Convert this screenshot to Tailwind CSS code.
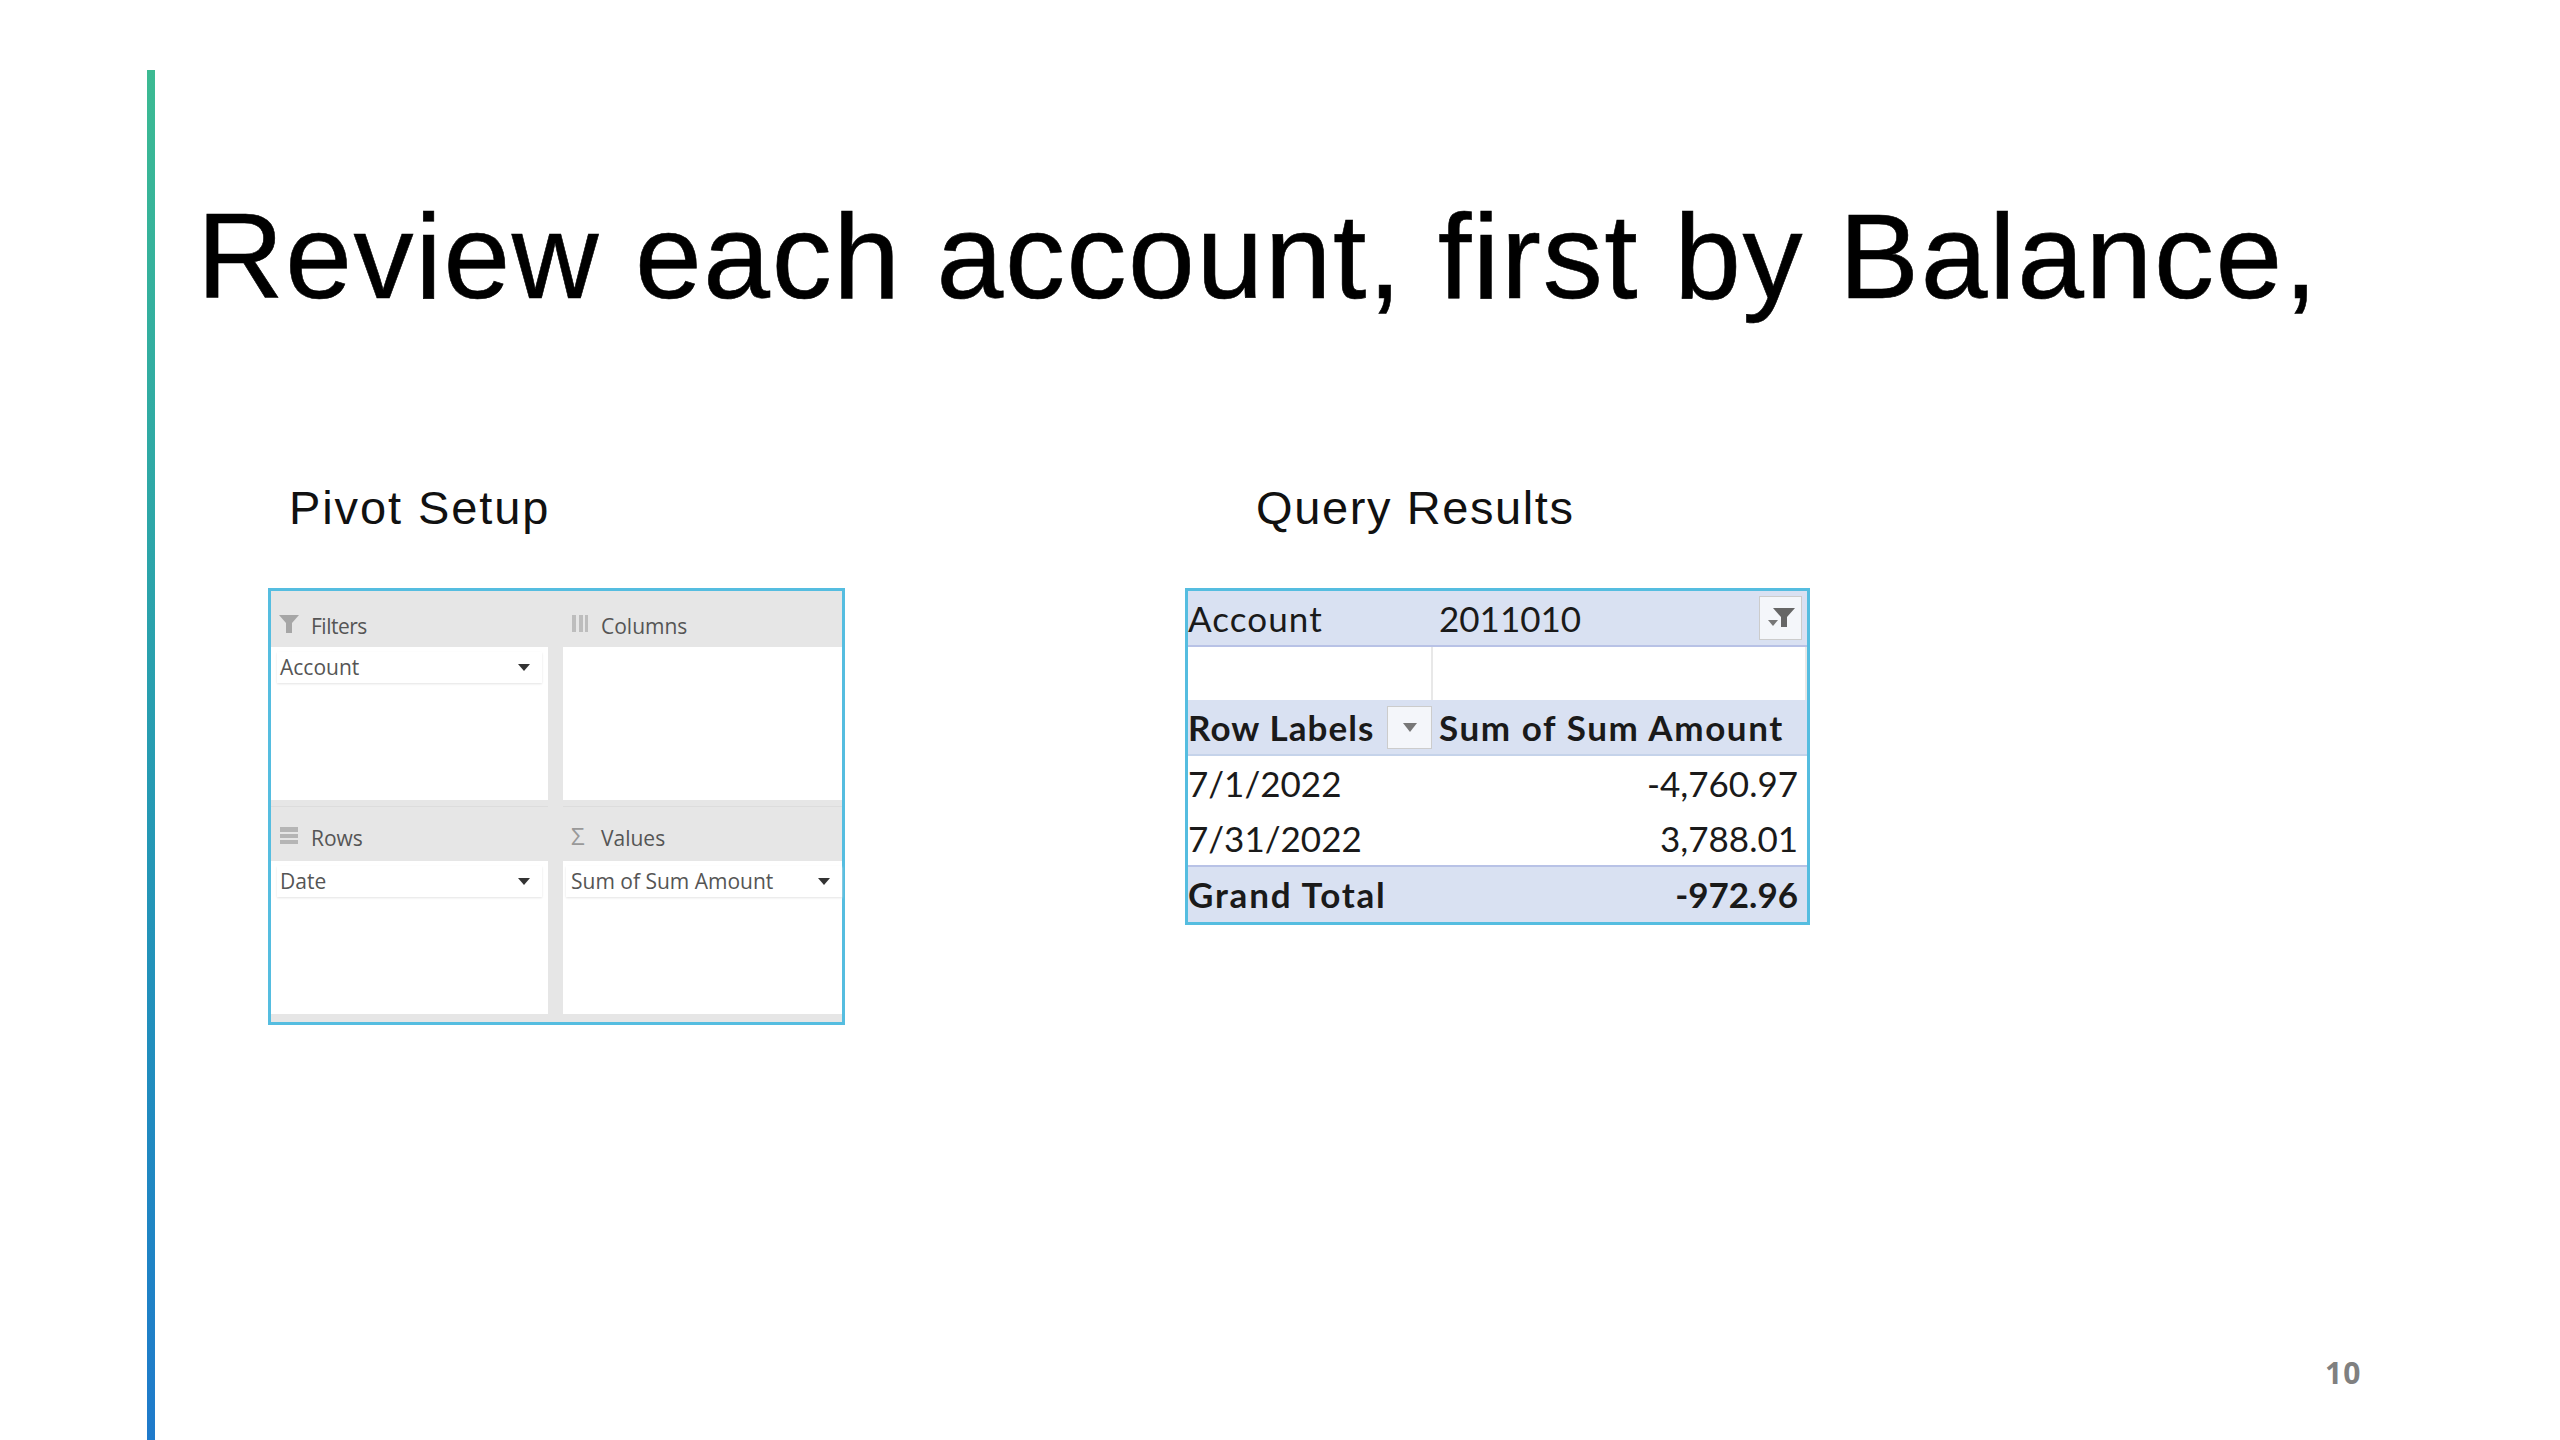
<!DOCTYPE html>
<html lang="en">
<head>
    <meta charset="UTF-8">
    <title>Review each account</title>
    <script src="https://cdn.jsdelivr.net/npm/@tailwindcss/browser@4"></script>
</head>
<body class="bg-white w-[2560px] h-[1440px] overflow-hidden font-['Liberation_Sans',sans-serif]">
    <div class="h-full pt-[70px] pl-[147px] flex">
        <!-- accent bar -->
        <div class="w-2 h-[1370px] bg-gradient-to-b from-[#3cba92] to-[#1f7acb]"></div>

        <div class="flex-1 flex flex-col">
            <h1 class="mt-[116px] ml-[42px] text-[120px] leading-[140px] tracking-[1.6px] text-black whitespace-nowrap [-webkit-text-stroke:0.6px_black]">Review each account, first by Balance,</h1>

            <div class="flex mt-[152px]">
                <!-- pivot setup -->
                <div class="w-[917px] ml-[113px]">
                    <div class="ml-[21px] h-[60px] text-[47px] leading-[60px] text-[#111] tracking-[1.9px]">Pivot Setup</div>
                    <div class="mt-[50px] w-[577px] h-[437px] border-[3px] border-[#55bde0] bg-[#e6e6e6] grid grid-cols-[277px_1fr] grid-rows-[215px_1fr] gap-x-[15px] font-['Open_Sans',sans-serif] text-[21px] text-[#555]">
                        <div class="flex flex-col">
                            <div class="h-[56px] pt-4 flex items-center pl-2 gap-[12px]">
                                <svg class="w-5 h-5 mt-[-6px]" viewBox="0 0 20 20"><path d="M0 1h20l-7 8v10h-6V9z" fill="#a6a6a6"/></svg>
                                <span class="tracking-[-0.5px]">Filters</span>
                            </div>
                            <div class="flex-1 mb-[6px] bg-white pt-[5px] px-[6px]">
                                <div class="h-[31px] flex items-center justify-between pl-[3px] pr-3 shadow-[0_1px_2px_#e4e4e4]">
                                    <span>Account</span>
                                    <span class="w-0 h-0 border-x-[6px] border-t-[7px] border-x-transparent border-t-[#333]"></span>
                                </div>
                            </div>
                        </div>
                        <div class="flex flex-col">
                            <div class="h-[56px] pt-4 flex items-center pl-2 gap-[10px]">
                                <svg class="w-5 h-5 mt-[-6px]" viewBox="0 0 20 20"><path d="M1 1h4v17H1zM8 1h4v17H8zM14 1h3v17h-3z" fill="#bdbdbd"/></svg>
                                <span>Columns</span>
                            </div>
                            <div class="flex-1 mb-[6px] bg-white"></div>
                        </div>
                        <div class="flex flex-col border-t border-[#dcdcdc]">
                            <div class="h-[54px] pt-[10px] flex items-center pl-2 gap-[12px]">
                                <svg class="w-5 h-5 mt-[-6px]" viewBox="0 0 20 20"><path d="M1 1h18v5H1zM1 8h18v4H1zM1 14h18v4H1z" fill="#b5b5b5"/></svg>
                                <span>Rows</span>
                            </div>
                            <div class="flex-1 mb-2 bg-white pt-[5px] px-[6px]">
                                <div class="h-[31px] flex items-center justify-between pl-[3px] pr-3 shadow-[0_1px_2px_#e4e4e4]">
                                    <span>Date</span>
                                    <span class="w-0 h-0 border-x-[6px] border-t-[7px] border-x-transparent border-t-[#333]"></span>
                                </div>
                            </div>
                        </div>
                        <div class="flex flex-col border-t border-[#dcdcdc]">
                            <div class="h-[54px] pt-[10px] flex items-center pl-2 gap-[10px]">
                                <span class="w-5 mt-[-6px] text-[24px] leading-5 text-[#999]">Σ</span>
                                <span>Values</span>
                            </div>
                            <div class="flex-1 mb-2 bg-white pt-[5px] pl-[3px]">
                                <div class="h-[31px] flex items-center justify-between pl-[5px] pr-3 shadow-[0_1px_2px_#e4e4e4]">
                                    <span>Sum of Sum Amount</span>
                                    <span class="w-0 h-0 border-x-[6px] border-t-[7px] border-x-transparent border-t-[#333]"></span>
                                </div>
                            </div>
                        </div>
                    </div>
                </div>

                <!-- query results -->
                <div>
                    <div class="ml-[71px] h-[60px] text-[47px] leading-[60px] text-[#111] tracking-[1.6px]">Query Results</div>
                    <div class="mt-[50px] w-[625px] h-[337px] border-[3px] border-[#55bde0] font-['Lato',sans-serif] text-[35px] text-[#1a1a1a] flex flex-col">
                        <div class="h-[56px] bg-[#d9e1f2] border-b-2 border-[#b8c2e6] flex items-center pr-[5px]">
                            <span class="w-[251px] tracking-[1.1px]">Account</span>
                            <span class="flex-1">2011010</span>
                            <span class="w-[43px] h-[44px] bg-[#f4f6fa] border border-[#ccc] flex items-center justify-center">
                                <svg class="w-8 h-6" viewBox="0 0 32 24"><path d="M8 2h22l-8 9v10h-6V11z" fill="#666"/><path d="M3 14h10l-5 6z" fill="#777"/></svg>
                            </span>
                        </div>
                        <div class="h-[53px] flex border-r-2 border-[#e8e8e8]">
                            <div class="w-[245px] border-r-2 border-[#e8e8e8]"></div>
                        </div>
                        <div class="h-[56px] bg-[#d9e1f2] border-b-2 border-[#c5d3ea] flex items-center font-bold">
                            <span class="w-[199px] tracking-[1.1px] whitespace-nowrap">Row Labels</span>
                            <span class="w-[45px] h-[43px] bg-[#f4f6fa] border border-[#ccc] flex items-center justify-center">
                                <span class="w-0 h-0 border-x-[7px] border-t-[9px] border-x-transparent border-t-[#777]"></span>
                            </span>
                            <span class="ml-[7px] tracking-[1.6px] whitespace-nowrap">Sum of Sum Amount</span>
                        </div>
                        <div class="h-[55px] flex items-center justify-between pr-[9px]">
                            <span>7/1/2022</span><span>-4,760.97</span>
                        </div>
                        <div class="h-[54px] flex items-center justify-between pr-[9px]">
                            <span>7/31/2022</span><span>3,788.01</span>
                        </div>
                        <div class="flex-1 bg-[#d9e1f2] border-t-2 border-[#b8c2e6] flex items-center justify-between pr-[9px] font-bold">
                            <span class="tracking-[1.8px]">Grand Total</span><span>-972.96</span>
                        </div>
                    </div>
                </div>
            </div>

            <div class="mt-[330px] ml-[2170px] w-[50px] text-[30px] leading-9 font-bold text-[#808080] font-['Open_Sans',sans-serif] tracking-[1px]">10</div>
        </div>
    </div>
</body>
</html>
